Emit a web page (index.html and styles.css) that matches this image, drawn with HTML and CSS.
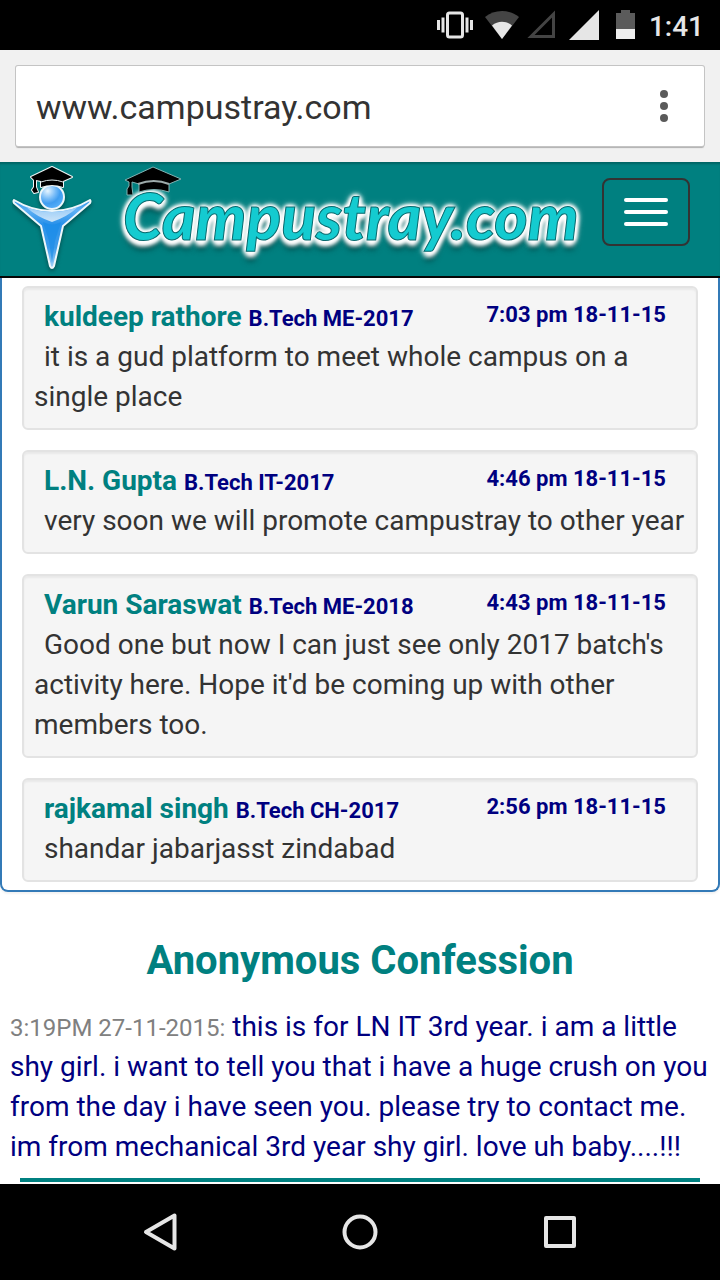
FILE: index.html
```html
<!DOCTYPE html>
<html lang="en">
<head>
<meta charset="utf-8">
<meta name="viewport" content="width=device-width, initial-scale=1">
<title>Campustray</title>
<link rel="stylesheet" href="styles.css">
</head>
<body>
<div class="screen">
  <div class="status">
    <svg width="220" height="50" viewBox="0 0 220 50" aria-hidden="true">
      <rect x="27.500" y="13" width="15" height="24" rx="2" fill="none" stroke="#e6e6e6" stroke-width="3"/>
      <path d="M17 20h3v10h-3zM21.500 17.500h3v15h-3zM45.500 17.500h3v15h-3zM50 20h3v10h-3z" fill="#e6e6e6"/>
      <path d="M65 17C74 9 90 9 99 17L82 39z" fill="#444"/>
      <path d="M72 25.500C78 20.500 86 20.500 92 25.500L82 39z" fill="#e6e6e6"/>
      <path d="M133.500 14v22.500H111z" fill="none" stroke="#444" stroke-width="3"/>
      <path d="M179 10v30h-30z" fill="#e6e6e6"/>
      <path d="M196 13h5v-3h9v3h5v16h-19z" fill="#5b5b5b"/>
      <path d="M196 29h19v10h-19z" fill="#eee"/>
    </svg>
    <time class="clock">1:41</time>
  </div>
  <div class="browser">
    <div class="omnibox">
      <input class="url" type="text" aria-label="Address" value="www.campustray.com">
      <button class="more" type="button" aria-label="Menu"><i></i><i></i><i></i></button>
    </div>
  </div>
  <header class="header">
    <a class="logo" href="#" aria-label="Home">
      <svg width="84" height="112" viewBox="0 0 84 112">
        <defs>
          <linearGradient id="body" x1="0" y1="0" x2="0" y2="1">
            <stop offset="0" stop-color="#2d93ea"/><stop offset=".15" stop-color="#5fb0f4"/><stop offset=".35" stop-color="#2b92ea"/><stop offset=".7" stop-color="#3d9bea"/><stop offset="1" stop-color="#a5d3f8"/>
          </linearGradient>
          <linearGradient id="chest" x1="0" y1="0" x2="0" y2="1">
            <stop offset="0" stop-color="#9dcdf7"/><stop offset="1" stop-color="#e6f2fb"/>
          </linearGradient>
          <radialGradient id="head" cx=".32" cy=".25" r=".8">
            <stop offset="0" stop-color="#e6f5ff"/><stop offset=".4" stop-color="#7abdf8"/><stop offset=".65" stop-color="#3f9df0"/><stop offset="1" stop-color="#58b1fa"/>
          </radialGradient>
        </defs>
        <g class="figure">
          <path d="M2 38Q20 49 40 49T78 38Q79 39 78 41L51 64L42 104Q40 108 38 104L29 64L2 41Q1 39 2 38z" fill="url(#body)" stroke="#eef7fb" stroke-width="2" stroke-linejoin="round"/>
          <path d="M14 45Q27 50 40 50T66 45Q55 55 40 60Q25 55 14 45z" fill="url(#chest)" opacity=".85"/>
          <path d="M31 60Q40 65 49 60L43 79L40 101L37 79z" fill="#168be8" opacity=".6"/>
          <circle cx="40" cy="35" r="12" fill="url(#head)" stroke="#eef7fb" stroke-width="2"/>
        </g>
        <path d="M40 5L60 15L51 19V25Q40 21 29 25V19L24 18V25L26 30L22 31L20 28L22 25V18L19 15z" fill="#000" stroke="#eef5f5" stroke-width="2" stroke-linejoin="round" paint-order="stroke"/>
        <path d="M29 20Q40 16 51 20" fill="none" stroke="#dce6e6" stroke-width="1"/>
      </svg>
    </a>
    <a class="brand" href="#">Campustray.com
      <svg class="cap" width="64" height="36" viewBox="0 0 64 36" aria-hidden="true">
        <path d="M33 3L61 15L49 20V28Q34 23 19 28V20L12 18V23L13 31H7V25L9 22V18L5 16z" fill="#000" stroke="#80b2b2" stroke-width="1" stroke-linejoin="round"/>
        <path d="M18 20Q34 14 49 20" fill="none" stroke="#9eabab" stroke-width="2"/>
      </svg>
    </a>
    <button class="toggle" type="button" aria-label="Toggle navigation"><i></i><i></i><i></i></button>
  </header>
  <main class="content">
    <section class="panel">
      <article class="card">
        <div class="meta"><h2 class="name">kuldeep rathore <small>B.Tech ME-2017</small></h2><time class="when">7:03 pm 18-11-15</time></div>
        <p class="message">it is a gud platform to meet whole campus on a single place</p>
      </article>
      <article class="card">
        <div class="meta"><h2 class="name">L.N. Gupta <small>B.Tech IT-2017</small></h2><time class="when">4:46 pm 18-11-15</time></div>
        <p class="message">very soon we will promote campustray to other year</p>
      </article>
      <article class="card">
        <div class="meta"><h2 class="name">Varun Saraswat <small>B.Tech ME-2018</small></h2><time class="when">4:43 pm 18-11-15</time></div>
        <p class="message">Good one but now I can just see only 2017 batch's activity here. Hope it'd be coming up with other members too.</p>
      </article>
      <article class="card">
        <div class="meta"><h2 class="name">rajkamal singh <small>B.Tech CH-2017</small></h2><time class="when">2:56 pm 18-11-15</time></div>
        <p class="message">shandar jabarjasst zindabad</p>
      </article>
    </section>
    <section class="confession">
      <h1 class="title">Anonymous Confession</h1>
      <p class="story"><time class="stamp">3:19PM 27-11-2015:</time> this is for LN IT 3rd year. i am a little shy girl. i want to tell you that i have a huge crush on you from the day i have seen you. please try to contact me. im from mechanical 3rd year shy girl. love uh baby....!!!</p>
      <hr class="rule">
    </section>
  </main>
  <nav class="system" aria-label="System">
    <button type="button" aria-label="Back"><svg width="40" height="40" viewBox="0 0 40 40"><path d="M34.500 3.500v33L6 20z"/></svg></button>
    <button type="button" aria-label="Home"><svg width="40" height="40" viewBox="0 0 40 40"><circle cx="20" cy="20" r="15.500"/></svg></button>
    <button type="button" aria-label="Recent apps"><svg width="40" height="40" viewBox="0 0 40 40"><path d="M6 6h28v28H6z"/></svg></button>
  </nav>
</div>
</body>
</html>
```
FILE: styles.css
```css
* { box-sizing: border-box; }
body {
  margin: 0;
  background: #fff;
  color: #333;
  font-family: Roboto, "Liberation Sans", sans-serif;
  font-size: 28px;
  line-height: 40px;
}
button { padding: 0; background: none; border: 0; }
.screen { display: flex; flex-direction: column; min-height: 100vh; }
.status {
  display: flex;
  align-items: center;
  justify-content: flex-end;
  gap: 9px;
  height: 50px;
  padding-right: 16px;
  background: #000;
}
.clock { color: #e6e6e6; font-size: 28px; font-weight: 500; padding-top: 3px; }
.browser { padding: 16px; background: #f1f1f1; }
.omnibox {
  display: flex;
  align-items: center;
  height: 80px;
  padding: 0 26px 0 20px;
  background: #fff;
  border-radius: 2px;
  box-shadow: 0 0 0 1px #c4c4c4, 0 2px 1px #b0b0b0;
}
.url {
  flex: 1;
  min-width: 0;
  padding: 2px 0 0;
  border: 0;
  outline: 0;
  background: none;
  color: #333;
  font: 34px Roboto, "Liberation Sans", sans-serif;
}
.more { display: flex; flex-direction: column; align-items: center; gap: 4px; width: 28px; }
.more i { width: 8px; height: 8px; border-radius: 50%; background: #5a5a5a; }
.header {
  display: flex;
  align-items: flex-start;
  height: 116px;
  padding: 0 30px 0 12px;
  background: #008080;
  border-bottom: 2px solid #060606;
  box-shadow: inset 0 3px 2px -1px #006565;
}
.logo { display: flex; }
.figure { filter: drop-shadow(0 2px 2px #034b4b); }
.brand {
  position: relative;
  margin-left: 27px;
  padding-top: 12px;
  color: #14cbd0;
  font-family: Lato, sans-serif;
  font-size: 64px;
  font-style: italic;
  font-weight: 900;
  line-height: 84px;
  white-space: nowrap;
  text-decoration: none;
  -webkit-text-stroke: 1px #08696d;
  text-shadow: 0 0 3px #fff, 0 0 5px #fff, 3px 1px 4px #fff, -3px 1px 4px #fff, 0 -2px 4px #fff, 0 4px 5px #fff, 0 5px 5px #fff, 0 0 9px #fff, 0 9px 6px #033f3f;
}
.cap { position: absolute; top: 2px; left: -3px; }
.toggle {
  display: flex;
  flex-direction: column;
  align-items: center;
  justify-content: center;
  gap: 8px;
  width: 88px;
  height: 68px;
  margin: 16px 0 0 auto;
  border: 2px solid #333;
  border-radius: 8px;
}
.toggle i { width: 44px; height: 4px; border-radius: 2px; background: #fff; }
.content { flex: 1; }
.panel {
  display: flex;
  flex-direction: column;
  gap: 20px;
  padding: 8px 20px;
  border: 2px solid #337ab7;
  border-top: 0;
  border-radius: 0 0 8px 8px;
  box-shadow: 0 2px 2px rgba(0, 0, 0, .05);
}
.card {
  padding: 9px 0 11px 10px;
  background: #f5f5f5;
  border: 2px solid #e3e3e3;
  border-radius: 6px;
  box-shadow: inset 0 2px 2px rgba(0, 0, 0, .05);
}
.meta { display: flex; justify-content: space-between; padding: 0 30px 0 10px; }
.name { margin: 0; color: #008080; font-size: 28px; font-weight: 700; }
.name small { color: #000080; font-size: 22px; line-height: 1; }
.when { color: #000080; font-size: 22px; font-weight: 700; line-height: 36px; }
.message { margin: 0; text-indent: 10px; }
.confession { padding: 45px 10px 2px; }
.title { margin: 0 0 22px; color: #008080; font-size: 40px; font-weight: 700; line-height: 48px; text-align: center; }
.story { margin: 0; color: #000080; }
.stamp { color: gray; font-size: 24px; line-height: 1; }
.rule { height: 4px; margin: 11px 10px 0; border: 0; background: #008080; }
.system {
  display: flex;
  justify-content: center;
  gap: 160px;
  padding: 28px 0;
  background: #000;
}
.system button { display: flex; }
.system svg { fill: none; stroke: #e6e6e6; stroke-width: 4; stroke-linejoin: round; }
```
